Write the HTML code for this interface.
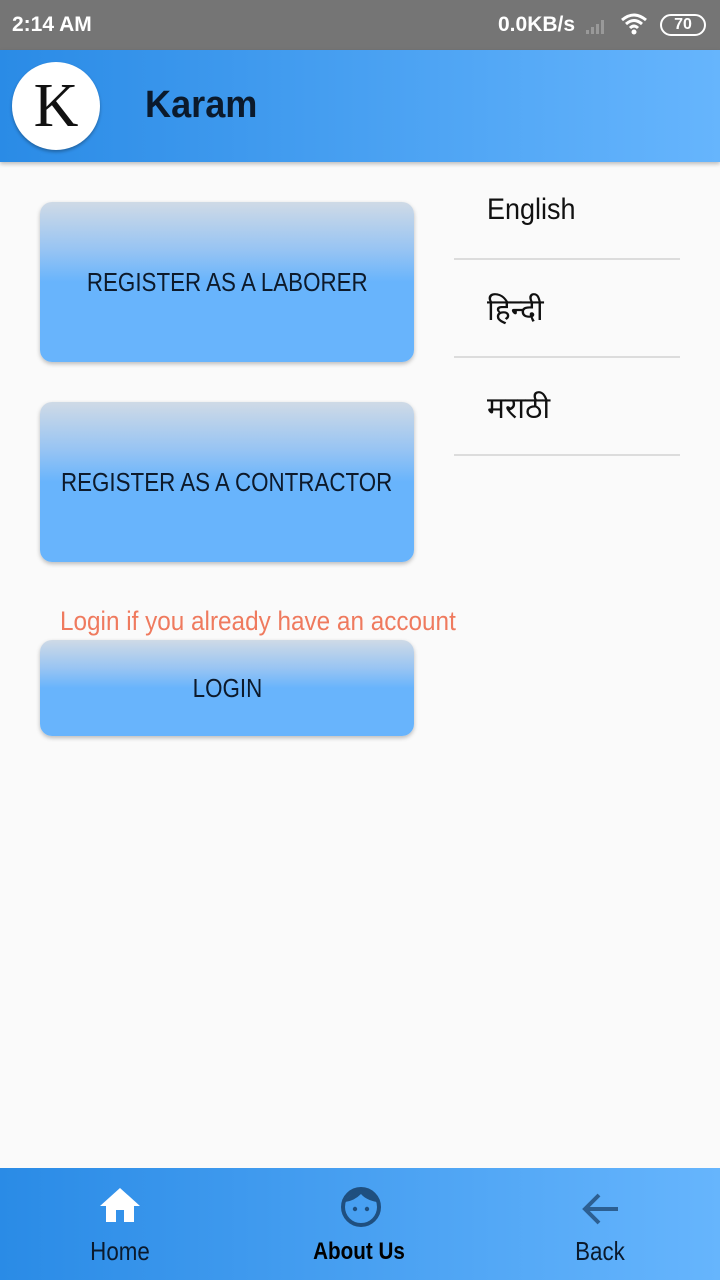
<!DOCTYPE html>
<html><head><meta charset="utf-8"><style>
*{margin:0;padding:0;box-sizing:border-box}
body{width:720px;height:1280px;background:#fafafa;position:relative;overflow:hidden;font-family:"Liberation Sans",sans-serif}
.status{position:absolute;top:0;left:0;width:720px;height:50px;background:#757575;color:#fff;font-weight:bold;font-size:21px}
.bar{position:absolute;top:50px;left:0;width:720px;height:112px;background:linear-gradient(90deg,#2a8be6,#66b5fd);box-shadow:0 2px 4px rgba(0,0,0,.25)}
.logo{position:absolute;left:12px;top:12px;width:88px;height:88px;border-radius:50%;background:#fff;box-shadow:0 2px 3px rgba(0,0,0,.3);font-family:"Liberation Serif",serif;font-size:62px;text-align:center;line-height:88px;color:#111}
.title{position:absolute;left:145px;top:34px;font-size:38px;font-weight:bold;color:#0b1a2c;transform:scaleX(.95);transform-origin:left}
.btn{position:absolute;left:40px;width:374px;border-radius:12px;background:linear-gradient(180deg,#cfdae6 0%,#97c4f3 30%,#68b4fc 50%,#68b4fc 100%);box-shadow:0 2px 4px rgba(0,0,0,.25);display:flex;align-items:center;justify-content:center;color:#0d1a2b;font-size:26px}
.btn span{display:inline-block;transform:scaleX(.86);white-space:nowrap}
.lang{position:absolute;left:487px;font-size:30px;color:#111}
.line{position:absolute;left:454px;width:226px;height:2px;background:#dcdcdc}
.nav{position:absolute;top:1168px;left:0;width:720px;height:112px;background:linear-gradient(90deg,#2a8be6,#66b5fd)}
.nl{position:absolute;top:68px;font-size:26px;color:#0b1a2c;transform:translateX(-50%) scaleX(.86)}
</style></head><body>
<div class="status"><span style="position:absolute;left:12px;top:13px">2:14 AM</span>
<span style="position:absolute;left:498px;top:13px">0.0KB/s</span>
<svg style="position:absolute;left:584px;top:16px" width="28" height="20"><rect x="2" y="14" width="3" height="4" fill="#999"/><rect x="7" y="11" width="3" height="7" fill="#999"/><rect x="12" y="8" width="3" height="10" fill="#999"/><rect x="17" y="4" width="3" height="14" fill="#999"/></svg>
<svg style="position:absolute;left:620px;top:13px" width="28" height="22" viewBox="0 0 28 22"><path d="M2 7 Q14 -3 26 7 M6 11 Q14 4 22 11 M10 15 Q14 11 18 15" stroke="#fff" stroke-width="3" fill="none"/><circle cx="14" cy="19" r="2.5" fill="#fff"/></svg>
<div style="position:absolute;left:660px;top:14px;width:46px;height:22px;border:2px solid #fff;border-radius:11px;font-size:16px;text-align:center;line-height:18px">70</div></div>
<div class="bar"><div class="logo">K</div><div class="title">Karam</div></div>
<div class="btn" style="top:202px;height:160px"><span>REGISTER AS A LABORER</span></div>
<div class="btn" style="top:402px;height:160px"><span>REGISTER AS A CONTRACTOR</span></div>
<div style="position:absolute;left:60px;top:606px;font-size:27px;color:#ef7a5e;transform:scaleX(.9);transform-origin:left;white-space:nowrap">Login if you already have an account</div>
<div class="btn" style="top:640px;height:96px"><span>LOGIN</span></div>
<div class="lang" style="top:193px;transform:scaleX(.9);transform-origin:left">English</div>
<div class="line" style="top:258px"></div>
<div class="lang" style="top:288px">हिन्दी</div>
<div class="line" style="top:356px"></div>
<div class="lang" style="top:386px">मराठी</div>
<div class="line" style="top:454px"></div>
<div class="nav">
<svg style="position:absolute;left:100px;top:18px" width="40" height="36" viewBox="0 0 40 36"><path d="M20 2 L40 20 L34 20 L34 36 L24 36 L24 24 L16 24 L16 36 L6 36 L6 20 L0 20 Z" fill="#fff"/></svg>
<svg style="position:absolute;left:340px;top:18px" width="42" height="42" viewBox="0 0 42 42"><circle cx="21" cy="21" r="18" fill="none" stroke="#1f4f7f" stroke-width="4"/><path d="M5 16 Q12 4 21 4 Q33 4 37 16 Q26 14 21 8 Q14 15 5 16Z" fill="#1f4f7f"/><circle cx="15" cy="23" r="2.2" fill="#1f4f7f"/><circle cx="27" cy="23" r="2.2" fill="#1f4f7f"/></svg>
<svg style="position:absolute;left:582px;top:24px" width="38" height="34" viewBox="0 0 38 34"><path d="M36 17 H4 M17 3 L3 17 L17 31" stroke="#2c5f92" stroke-width="4" fill="none"/></svg>
<div class="nl" style="left:120px">Home</div>
<div class="nl" style="left:359px;font-weight:bold;font-size:24px;top:70px;color:#000">About Us</div>
<div class="nl" style="left:600px">Back</div>
</div>
</body></html>
